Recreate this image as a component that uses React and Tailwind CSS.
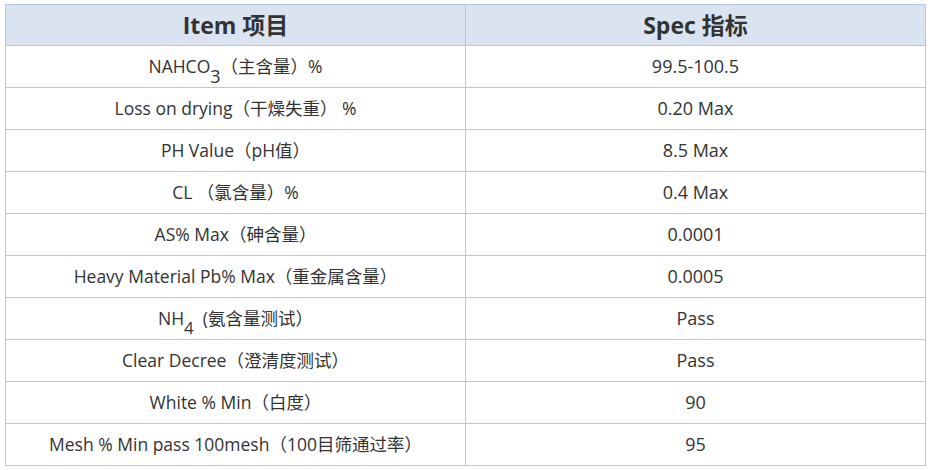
import React from 'react';

const rows = [
  { item: <>NAHCO<sub className="text-[18px] align-[-6px] leading-none">3</sub>（主含量）%</>, spec: '99.5-100.5' },
  { item: 'Loss on drying（干燥失重） %', spec: '0.20 Max' },
  { item: 'PH Value（pH值）', spec: '8.5 Max' },
  { item: 'CL （氯含量）%', spec: '0.4 Max' },
  { item: 'AS% Max（砷含量）', spec: '0.0001' },
  { item: 'Heavy Material Pb% Max（重金属含量）', spec: '0.0005' },
  { item: <>NH<sub className="text-[17px] align-[-5px] leading-none">4</sub>  (氨含量测试）</>, spec: 'Pass' },
  { item: 'Clear Decree（澄清度测试）', spec: 'Pass' },
  { item: 'White % Min（白度）', spec: '90' },
  { item: 'Mesh % Min pass 100mesh（100目筛通过率）', spec: '95' },
];

const App = () => {
  return (
    <div
      className="w-[932px] h-[470px] bg-white pt-[4px] pl-[5px] text-[#333333]"
      style={{ fontFamily: '"Open Sans", "Noto Sans CJK SC", sans-serif' }}
    >
      <table className="w-[921px] border-collapse table-fixed">
        <thead>
          <tr className="h-[41px] bg-[#dae3f0]">
            <th className="w-[460px] border border-[#b4c7e7] text-[23px] font-bold text-[#333333] p-0">Item 项目</th>
            <th className="border border-[#b4c7e7] text-[23px] font-bold text-[#333333] p-0">Spec 指标</th>
          </tr>
        </thead>
        <tbody>
          {rows.map((row, i) => (
            <tr key={i} className="h-[42px]">
              <td className="border border-[#b4c7e7] text-center text-[17.5px] p-0 whitespace-pre">{row.item}</td>
              <td className="border border-[#b4c7e7] text-center text-[18px] p-0">{row.spec}</td>
            </tr>
          ))}
        </tbody>
      </table>
    </div>
  );
};

export default App;
